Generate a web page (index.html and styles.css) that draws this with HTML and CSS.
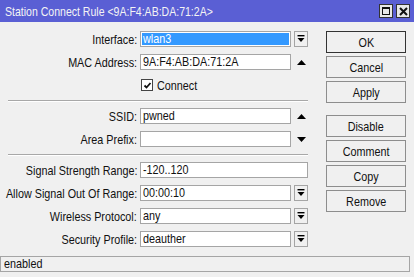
FILE: index.html
```html
<!DOCTYPE html>
<html>
<head>
<meta charset="utf-8">
<link rel="stylesheet" href="styles.css">
</head>
<body>
<div class="window">
  <div class="titlebar">
    <span class="title"><span class="t">Station Connect Rule &lt;9A:F4:AB:DA:71:2A&gt;</span></span>
    <div class="tb-btns">
      <span class="tb-btn"><span class="max-box"></span></span>
      <span class="tb-btn">
        <svg width="9" height="9" viewBox="0 0 9 9"><path d="M1 1L8 8M8 1L1 8" stroke="#111" stroke-width="2"/></svg>
      </span>
    </div>
  </div>
  <div class="main">
    <div class="form">
      <div class="row">
        <span class="label"><span class="t">Interface:</span></span>
        <span class="field selected"><span class="t">wlan3</span></span>
        <span class="dd"><svg width="8" height="8" viewBox="0 0 8 8"><rect x="0.5" y="0" width="7" height="1.4" fill="#000"/><path d="M0.5 3H7.5L4 7Z" fill="#000"/></svg></span>
      </div>
      <div class="row">
        <span class="label"><span class="t">MAC Address:</span></span>
        <span class="field"><span class="t">9A:F4:AB:DA:71:2A</span></span>
        <span class="arrow"><svg width="9" height="5" viewBox="0 0 9 5"><path d="M0 5H9L4.5 0Z" fill="#000"/></svg></span>
      </div>
      <div class="row">
        <span class="label"></span>
        <span class="check">
          <span class="box"><svg width="9" height="9" viewBox="0 0 9 9"><path d="M1.5 4.5L3.5 6.5L7.5 2" stroke="#111" stroke-width="1.8" fill="none"/></svg></span>
          <span class="t">Connect</span>
        </span>
      </div>
      <div class="sep"></div>
      <div class="row">
        <span class="label"><span class="t">SSID:</span></span>
        <span class="field"><span class="t">pwned</span></span>
        <span class="arrow"><svg width="9" height="5" viewBox="0 0 9 5"><path d="M0 5H9L4.5 0Z" fill="#000"/></svg></span>
      </div>
      <div class="row">
        <span class="label"><span class="t">Area Prefix:</span></span>
        <span class="field"></span>
        <span class="arrow"><svg width="9" height="5" viewBox="0 0 9 5"><path d="M0 0H9L4.5 5Z" fill="#000"/></svg></span>
      </div>
      <div class="sep"></div>
      <div class="row">
        <span class="label"><span class="t">Signal Strength Range:</span></span>
        <span class="field wide"><span class="t">-120..120</span></span>
      </div>
      <div class="row">
        <span class="label"><span class="t">Allow Signal Out Of Range:</span></span>
        <span class="field"><span class="t">00:00:10</span></span>
        <span class="dd"><svg width="8" height="8" viewBox="0 0 8 8"><rect x="0.5" y="0" width="7" height="1.4" fill="#000"/><path d="M0.5 3H7.5L4 7Z" fill="#000"/></svg></span>
      </div>
      <div class="row">
        <span class="label"><span class="t">Wireless Protocol:</span></span>
        <span class="field"><span class="t">any</span></span>
        <span class="dd"><svg width="8" height="8" viewBox="0 0 8 8"><rect x="0.5" y="0" width="7" height="1.4" fill="#000"/><path d="M0.5 3H7.5L4 7Z" fill="#000"/></svg></span>
      </div>
      <div class="row">
        <span class="label"><span class="t">Security Profile:</span></span>
        <span class="field"><span class="t">deauther</span></span>
        <span class="dd"><svg width="8" height="8" viewBox="0 0 8 8"><rect x="0.5" y="0" width="7" height="1.4" fill="#000"/><path d="M0.5 3H7.5L4 7Z" fill="#000"/></svg></span>
      </div>
    </div>
    <div class="buttons">
      <span class="button default"><span class="t">OK</span></span>
      <span class="button"><span class="t">Cancel</span></span>
      <span class="button"><span class="t">Apply</span></span>
      <span class="button group"><span class="t">Disable</span></span>
      <span class="button"><span class="t">Comment</span></span>
      <span class="button"><span class="t">Copy</span></span>
      <span class="button"><span class="t">Remove</span></span>
    </div>
  </div>
  <div class="status"><span class="t">enabled</span></div>
</div>
</body>
</html>
```
FILE: styles.css
```css
html, body {
  margin: 0;
  padding: 0;
}
body {
  background: #f0f0f0;
  font-family: "Liberation Sans", Arial, sans-serif;
  font-size: 13px;
  color: #111;
}
/* the reference text is narrow (condensed) */
.t {
  display: inline-block;
  white-space: nowrap;
  transform: scaleX(0.83);
  transform-origin: left center;
}
.title .t {
  transform: scaleX(0.81);
}
.window {
  width: 414px;
  height: 277px;
  display: flex;
  flex-direction: column;
  overflow: hidden;
}
.titlebar {
  height: 22px;
  background: #5a5fd4;
  color: #f4f4f4;
  display: flex;
  align-items: center;
  justify-content: space-between;
  padding: 0 4px 0 5px;
  flex: none;
}
.title {
  flex: 1;
  min-width: 0;
}
.tb-btns {
  display: flex;
  gap: 3px;
  flex: none;
}
.tb-btn {
  width: 14px;
  height: 14px;
  box-sizing: border-box;
  background: #e8e8e8;
  border: 1px solid #333;
  display: flex;
  align-items: center;
  justify-content: center;
}
.max-box {
  width: 8px;
  height: 8px;
  box-sizing: border-box;
  border: 1px solid #111;
  border-top-width: 2px;
}
.main {
  display: flex;
  padding-top: 9px;
  flex: none;
}
.form {
  width: 309px;
  display: flex;
  flex-direction: column;
  gap: 7px;
}
.row {
  display: flex;
  align-items: center;
  height: 16px;
}
.label {
  width: 137px;
  flex: none;
  display: flex;
  justify-content: flex-end;
}
.label .t {
  transform-origin: right center;
}
.field {
  margin-left: 3px;
  width: 151px;
  height: 16px;
  flex: none;
  box-sizing: border-box;
  border: 1px solid #a5a5a5;
  background: #fff;
  padding-left: 2px;
  line-height: 14px;
  overflow: hidden;
}
.field.wide {
  width: 168px;
}
.field.selected {
  background: #3399ff;
  color: #fff;
  box-shadow: inset 0 0 0 1px #fff;
}
.dd {
  margin-left: 3px;
  width: 14px;
  height: 16px;
  flex: none;
  box-sizing: border-box;
  border: 1px solid #a5a5a5;
  display: flex;
  align-items: center;
  justify-content: center;
}
.arrow {
  margin-left: 3px;
  width: 14px;
  display: flex;
  justify-content: center;
}
.check {
  margin-left: 4px;
  display: flex;
  align-items: center;
  gap: 4px;
}
.box {
  width: 12px;
  height: 12px;
  box-sizing: border-box;
  border: 1px solid #444;
  background: #fff;
  display: flex;
  align-items: center;
  justify-content: center;
}
.sep {
  margin-left: 8px;
  width: 300px;
  height: 1px;
  background: #a8a8a8;
  box-shadow: 0 1px 0 #fff;
}
.buttons {
  margin-left: 17px;
  width: 80px;
  display: flex;
  flex-direction: column;
  gap: 3px;
}
.button {
  height: 22px;
  box-sizing: border-box;
  border: 1px solid #8d8d8d;
  background: #f0f0f0;
  display: flex;
  align-items: center;
  justify-content: center;
}
.button .t {
  transform-origin: center center;
}
.button.default {
  border-color: #333;
}
.button.group {
  margin-top: 9px;
}
.status {
  margin-top: 9px;
  width: 410px;
  height: 16px;
  box-sizing: border-box;
  border: 1px solid #a5a5a5;
  padding-left: 3px;
  line-height: 14px;
  flex: none;
}
```
